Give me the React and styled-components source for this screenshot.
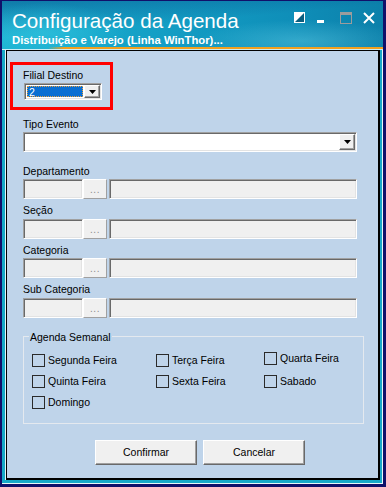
import React from 'react';
import styled, { createGlobalStyle } from 'styled-components';

const Global = createGlobalStyle`
  html, body { margin: 0; padding: 0; background: #10106a; }
  body { font-family: "Liberation Sans", Arial, sans-serif; }
  * { box-sizing: border-box; }
`;

const Window = styled.div`
  width: 386px;
  height: 487px;
  display: flex;
  flex-direction: column;
  border-style: solid;
  border-color: #10106a;
  border-width: 1px 3px 3px 2px;
  background: #17a9c8;
  overflow: hidden;
`;

const TitleBar = styled.div`
  height: 49px;
  flex: none;
  display: flex;
  justify-content: space-between;
  align-items: flex-start;
  padding: 7.6px 8px 0 10px;
  background:
    linear-gradient(#cdeef5, #cdeef5) left 0 bottom 0 / 100% 1px no-repeat,
    linear-gradient(to right, rgba(242, 160, 30, 0) 46px, #f2a01e 62px, #f2a01e 100%) left 0 bottom 1px / 100% 2px no-repeat,
    radial-gradient(ellipse 150px 30px at 300px 40px, rgba(120, 220, 240, 0.35), rgba(120, 220, 240, 0) 70%),
    radial-gradient(ellipse 120px 40px at 40px 30px, rgba(60, 205, 230, 0.5), rgba(60, 205, 230, 0) 70%),
    linear-gradient(175deg, rgba(3, 55, 120, 0.45) 0%, rgba(3, 55, 120, 0) 45%),
    linear-gradient(to right, #1bb2d1 0%, #149fc5 40%, #0f8fb9 75%, #0c80aa 100%);
`;

const TitleText = styled.div`
  display: flex;
  flex-direction: column;
  color: #fff;
`;

const Title = styled.div`
  font-size: 20.6px;
  line-height: 24px;
  white-space: nowrap;
`;

const Subtitle = styled.div`
  font-size: 11.3px;
  font-weight: bold;
  line-height: 13px;
  margin-top: 1px;
  white-space: nowrap;
`;

const Controls = styled.div`
  display: flex;
  margin-top: 3.4px;
`;

const ControlCell = styled.div`
  width: ${(p) => (p.$last ? 12 : 23)}px;
  height: 12px;
  display: flex;
  align-items: flex-start;
`;

const Body = styled.div`
  flex: 1;
  display: flex;
  padding: 0 2px 3px 4px;
  border-right: 1px solid #e8f6fa;
  border-bottom: 1px solid #e8f6fa;
`;

const Panel = styled.div`
  flex: 1;
  background: #bfd4ea;
  border-style: solid;
  border-color: #000;
  border-width: 1px 2px 2px 1px;
  box-shadow: -1px 0 0 #e8f6fa;
  display: flex;
  flex-direction: column;
  padding: 11px 0 0 16px;
`;

const Highlight = styled.div`
  width: 103px;
  margin-left: -13px;
  border: 3px solid #ff0000;
  padding: 3.5px 0 7px 10px;
  display: flex;
  flex-direction: column;
`;

const Label = styled.div`
  font-size: 10.5px;
  line-height: 12px;
  color: #000;
  white-space: nowrap;
  margin-bottom: ${(p) => p.$gap ?? 2.5}px;
`;

const Group = styled.div`
  display: flex;
  flex-direction: column;
  width: 334px;
  margin-top: ${(p) => p.$top}px;
`;

const Sunken = styled.div`
  border: 1px solid;
  border-color: #a0a0a0 #ffffff #ffffff #a0a0a0;
  box-shadow: inset 1px 1px 0 #696969, inset -1px -1px 0 #e3e3e3;
`;

const Combo = styled(Sunken)`
  width: ${(p) => p.$w}px;
  height: ${(p) => p.$h}px;
  background: #fff;
  display: flex;
  align-items: stretch;
  padding: 1px 1px 1px 2px;
  margin-left: ${(p) => p.$ml ?? 0}px;
`;

const ComboValue = styled.div`
  flex: 1;
  display: flex;
  align-items: center;
  font-size: 10.5px;
  color: #fff;
  background: ${(p) => (p.$selected ? '#0a6fd2' : 'transparent')};
  outline: ${(p) => (p.$selected ? '1px dotted #e8a040' : 'none')};
  outline-offset: -1px;
  padding-left: 2px;
  margin: ${(p) => (p.$selected ? '1px 1px 1px 0' : '0 1px 0 0')};
`;

const ArrowButton = styled.div`
  width: 16px;
  flex: none;
  background: #f0f0f0;
  border: 1px solid;
  border-color: #ffffff #696969 #696969 #ffffff;
  box-shadow: inset -1px -1px 0 #a0a0a0;
  display: flex;
  align-items: center;
  justify-content: center;
`;

const LookupRow = styled.div`
  display: flex;
  height: 20px;
  width: 334px;
`;

const LookupField = styled(Sunken)`
  background: #f0f0f0;
  width: ${(p) => (p.$w ? `${p.$w}px` : 'auto')};
  flex: ${(p) => (p.$w ? 'none' : '1')};
  margin-left: ${(p) => p.$ml ?? 0}px;
`;

const DotsButton = styled.div`
  width: 24px;
  flex: none;
  background: #f0f0f0;
  border: 1px solid;
  border-color: #ffffff #a0a0a0 #a0a0a0 #ffffff;
  display: flex;
  align-items: flex-end;
  justify-content: center;
  padding-bottom: 3px;
  font-size: 10px;
  line-height: 10px;
  color: #8c8c8c;
  letter-spacing: 0.5px;
`;

const GroupBox = styled.fieldset`
  width: 341px;
  margin: 13.3px 0 0 0;
  padding: 11px 0 14px 8px;
  border: 1px solid #e4e9ef;
  min-width: 0;
`;

const Legend = styled.legend`
  font-size: 10.5px;
  line-height: 12px;
  color: #000;
  padding: 0 1px;
  margin-left: -3px;
`;

const DaysGrid = styled.div`
  display: grid;
  grid-template-columns: 124px 108px auto;
  row-gap: 8px;
`;

const Day = styled.label`
  display: flex;
  align-items: center;
  height: 13px;
  gap: 3px;
  font-size: 10.5px;
  color: #000;
  white-space: nowrap;
  margin-top: ${(p) => (p.$raise ? -2 : 0)}px;
`;

const Box = styled.span`
  width: 13px;
  height: 13px;
  flex: none;
  border: 1px solid #2a2a2a;
  background: transparent;
`;

const Buttons = styled.div`
  display: flex;
  gap: 6px;
  margin: 16px 0 0 72px;
`;

const Button = styled.div`
  width: 102px;
  height: 25px;
  background: #f0f0f0;
  border: 1px solid;
  border-color: #ffffff #696969 #696969 #ffffff;
  box-shadow: inset -1px -1px 0 #a0a0a0;
  display: flex;
  align-items: center;
  justify-content: center;
  font-size: 10.5px;
  color: #000;
`;

const DownArrow = () => (
  <svg width="7" height="4" viewBox="0 0 7 4">
    <polygon points="0,0 7,0 3.5,4" fill="#000" />
  </svg>
);

const Lookup = ({ label, top }) => (
  <Group $top={top}>
    <Label>{label}</Label>
    <LookupRow>
      <LookupField $w={60} />
      <DotsButton>...</DotsButton>
      <LookupField $ml={2} />
    </LookupRow>
  </Group>
);

const days = [
  { name: 'Segunda Feira' },
  { name: 'Terça Feira' },
  { name: 'Quarta Feira', raise: true },
  { name: 'Quinta Feira' },
  { name: 'Sexta Feira' },
  { name: 'Sabado' },
  { name: 'Domingo' },
];

export default function App() {
  return (
    <>
      <Global />
      <Window>
        <TitleBar>
          <TitleText>
            <Title>Configuração da Agenda</Title>
            <Subtitle>Distribuição e Varejo (Linha WinThor)...</Subtitle>
          </TitleText>
          <Controls>
            <ControlCell>
              <svg width="11" height="11" viewBox="0 0 11 11">
                <rect x="0.5" y="0.5" width="10" height="10" fill="#0b5d7e" stroke="#fff" />
                <polygon points="0,0 11,0 0,11" fill="#fff" />
              </svg>
            </ControlCell>
            <ControlCell>
              <svg width="8" height="12" viewBox="0 0 8 12">
                <rect x="0" y="8" width="7" height="3" fill="#fff" />
              </svg>
            </ControlCell>
            <ControlCell>
              <svg width="12" height="12" viewBox="0 0 12 12">
                <rect x="0.5" y="0.5" width="11" height="11" fill="none" stroke="#9c9c9c" />
                <rect x="0" y="0" width="12" height="3" fill="#9c9c9c" />
              </svg>
            </ControlCell>
            <ControlCell $last>
              <svg width="12" height="12" viewBox="0 0 12 12">
                <path d="M1 1 L11 11 M11 1 L1 11" stroke="#fff" strokeWidth="2" />
              </svg>
            </ControlCell>
          </Controls>
        </TitleBar>
        <Body>
          <Panel>
            <Highlight>
              <Label>Filial Destino</Label>
              <Combo $w={78} $h={17} $ml={1}>
                <ComboValue $selected>2</ComboValue>
                <ArrowButton>
                  <DownArrow />
                </ArrowButton>
              </Combo>
            </Highlight>
            <Group $top={8}>
              <Label $gap={2}>Tipo Evento</Label>
              <Combo $w={334} $h={20}>
                <ComboValue />
                <ArrowButton>
                  <DownArrow />
                </ArrowButton>
              </Combo>
            </Group>
            <Lookup label="Departamento" top={12.7} />
            <Lookup label="Seção" top={5} />
            <Lookup label="Categoria" top={5} />
            <Lookup label="Sub Categoria" top={5} />
            <GroupBox>
              <Legend>Agenda Semanal</Legend>
              <DaysGrid>
                {days.map((d) => (
                  <Day key={d.name} $raise={d.raise}>
                    <Box />
                    {d.name}
                  </Day>
                ))}
              </DaysGrid>
            </GroupBox>
            <Buttons>
              <Button>Confirmar</Button>
              <Button>Cancelar</Button>
            </Buttons>
          </Panel>
        </Body>
      </Window>
    </>
  );
}
